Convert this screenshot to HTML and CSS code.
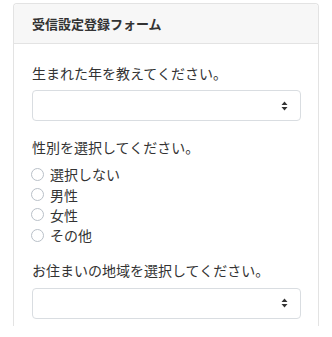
FILE: index.html
```html
<!DOCTYPE html>
<html lang="ja">
<head>
<meta charset="utf-8">
<link rel="stylesheet" href="styles.css">
</head>
<body>
<div class="page">
  <div class="card">
    <div class="card-header">受信設定登録フォーム</div>
    <div class="card-body">
      <div class="label l1">生まれた年を教えてください。</div>
      <div class="select"><span class="arrows"><svg width="7" height="10" viewBox="0 0 7 10"><path d="M3.5 0.5 L6.5 4 L0.5 4 Z M3.5 9.5 L6.5 6 L0.5 6 Z" fill="#333"/></svg></span></div>
      <div class="label l2">性別を選択してください。</div>
      <div class="radios">
        <div class="radio"><span class="circle"></span><span>選択しない</span></div>
        <div class="radio"><span class="circle"></span><span>男性</span></div>
        <div class="radio"><span class="circle"></span><span>女性</span></div>
        <div class="radio"><span class="circle"></span><span>その他</span></div>
      </div>
      <div class="label l3">お住まいの地域を選択してください。</div>
      <div class="select s2"><span class="arrows"><svg width="7" height="10" viewBox="0 0 7 10"><path d="M3.5 0.5 L6.5 4 L0.5 4 Z M3.5 9.5 L6.5 6 L0.5 6 Z" fill="#333"/></svg></span></div>
    </div>
  </div>
</div>
</body>
</html>
```

FILE: styles.css
```css
html, body {
  margin: 0;
  padding: 0;
  background: #fff;
}
body {
  font-family: "Noto Sans CJK JP", "Noto Sans", sans-serif;
  color: #333;
  font-size: 14px;
  overflow: hidden;
}
.page {
  padding: 3px 13px 0 13px;
}
.card {
  border: 1px solid #e3e3e3;
  border-bottom: none;
  border-radius: 4px 4px 0 0;
  height: 323px;
  box-sizing: border-box;
}
.card-header {
  background: #f7f7f7;
  border-bottom: 1px solid #e3e3e3;
  box-sizing: border-box;
  height: 40px;
  display: flex;
  align-items: center;
  padding-left: 18px;
  font-size: 13px;
  font-weight: bold;
  color: #333;
  border-radius: 4px 4px 0 0;
}
.card-body {
  padding: 0 17px 8px 18px;
}
.label {
  line-height: 20px;
  height: 20px;
}
.l1 { margin-top: 19px; }
.l2 { margin-top: 16px; }
.l3 { margin-top: 14px; }
.select {
  margin-top: 7px;
  height: 31px;
  box-sizing: border-box;
  border: 1px solid #d9dde1;
  border-radius: 4px;
  display: flex;
  align-items: center;
  justify-content: flex-end;
  padding-right: 12px;
}
.s2 { margin-top: 8px; }
.arrows { display: flex; }
.radios {
  margin-top: 7px;
  display: flex;
  flex-direction: column;
}
.radio {
  height: 20.4px;
  display: flex;
  align-items: center;
  gap: 6px;
}
.circle {
  width: 13px;
  height: 13px;
  margin-left: -1px;
  box-sizing: border-box;
  border: 1px solid #b9c0c8;
  border-radius: 50%;
}
```
